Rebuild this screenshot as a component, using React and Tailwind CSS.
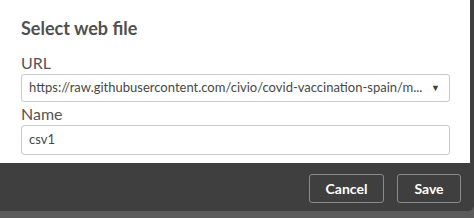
import React from 'react';

// Select web file dialog
export default function App() {
  return (
    <div className="w-[474px] h-[218px] bg-[#5b5b5b] overflow-hidden" style={{ fontFamily: 'Lato, "Open Sans", sans-serif' }}>
      <div className="w-[474px] h-[211px] bg-[#3f3f3f] rounded-br-md flex flex-col">
        {/* Form body */}
        <div className="w-[470px] h-[163px] bg-white pl-[21px] pr-[20px] pt-[17px] flex flex-col">
          <h2 className="text-[18px] font-bold text-[#505050] leading-[23px]">Select web file</h2>
          <label className="mt-[13px] text-[16px] text-[#555555] leading-[20px]">URL</label>
          <div className="mt-[1px] h-[28px] border border-[#c8c8c8] rounded-[3px] flex items-center pl-[7px] pr-[9px]">
            <span className="flex-1 text-[13px] text-[#484848] truncate">
              https://raw.githubusercontent.com/civio/covid-vaccination-spain/m...
            </span>
            <span className="text-[9px] text-[#404040] ml-2">▼</span>
          </div>
          <label className="mt-[2px] text-[16px] text-[#555555] leading-[20px]">Name</label>
          <div className="mt-[1px] h-[30px] border border-[#c8c8c8] rounded-[3px] flex items-center pl-[7px]">
            <span className="text-[13px] text-[#484848]">csv1</span>
          </div>
        </div>
        {/* Footer actions */}
        <div className="flex justify-end gap-[13px] pr-[13px] pt-[11px]">
          <button className="w-[75px] h-[29px] border-[1.5px] border-[#8a8a8a] rounded-[3px] text-white font-bold text-[14px]">Cancel</button>
          <button className="w-[64px] h-[29px] border-[1.5px] border-[#8a8a8a] rounded-[3px] text-white font-bold text-[14px]">Save</button>
        </div>
      </div>
    </div>
  );
}
